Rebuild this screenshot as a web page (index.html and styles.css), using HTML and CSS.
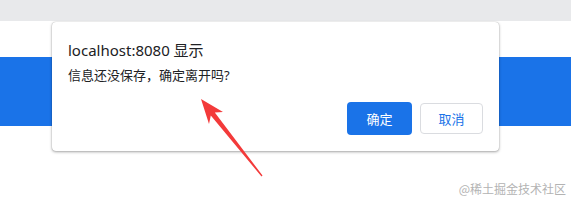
FILE: index.html
```html
<!DOCTYPE html>
<html lang="zh-CN">
<head>
    <meta charset="UTF-8">
    <title>离开提示</title>
    <link rel="stylesheet" href="styles.css">
</head>
<body>
    <div class="page">
        <div class="top-bar"></div>
        <div class="header-space"></div>
        <div class="banner"></div>
    </div>

    <div class="dialog">
        <div class="dialog-title">localhost:8080 显示</div>
        <div class="dialog-message">信息还没保存，确定离开吗?</div>
        <div class="dialog-buttons">
            <button class="btn btn-ok">确定</button>
            <button class="btn btn-cancel">取消</button>
        </div>
    </div>

    <!-- annotation arrow -->
    <svg class="arrow" width="571" height="202" viewBox="0 0 571 202">
        <polygon fill="#f33a3a" points="201,99 209,124 210.8,115.5 261.5,176.4 262.5,175.6 214.8,112.4 223,112"/>
    </svg>

    <div class="watermark">@稀土掘金技术社区</div>
</body>
</html>
```

FILE: styles.css
```css
body {
    margin: 0;
    width: 571px;
    height: 202px;
    position: relative;
    overflow: hidden;
    background: #ffffff;
    font-family: "Noto Sans", "Noto Sans CJK SC", sans-serif;
}
.top-bar {
    height: 21px;
    background: #e8e9eb;
}
.header-space {
    height: 36px;
}
.banner {
    height: 69px;
    background: #1a73e8;
}
.dialog {
    position: absolute;
    left: 52px;
    top: 22px;
    width: 447px;
    height: 129px;
    box-sizing: border-box;
    padding: 18px 16px 16px 16px;
    background: #ffffff;
    border-radius: 4px;
    box-shadow: 0 1px 3px rgba(0, 0, 0, 0.35), 0 0 1px rgba(0, 0, 0, 0.3);
    display: flex;
    flex-direction: column;
}
.dialog-title {
    font-size: 15px;
    line-height: 20px;
    color: #202124;
}
.dialog-message {
    margin-top: 6px;
    font-size: 13px;
    line-height: 18px;
    color: #202124;
}
.dialog-buttons {
    margin-top: auto;
    display: flex;
    justify-content: flex-end;
    align-items: center;
    gap: 8px;
}
.btn {
    font-family: "Noto Sans CJK SC", sans-serif;
    font-size: 13px;
    border-radius: 4px;
    cursor: pointer;
}
.btn-ok {
    width: 65px;
    height: 33px;
    background: #1a73e8;
    color: #ffffff;
    border: none;
}
.btn-cancel {
    width: 63px;
    height: 31px;
    background: #ffffff;
    color: #1a73e8;
    border: 1px solid #dadce0;
}
.arrow {
    position: absolute;
    left: 0;
    top: 0;
    pointer-events: none;
}
.watermark {
    position: absolute;
    right: 5px;
    bottom: 4px;
    font-family: "Noto Sans CJK SC", sans-serif;
    font-size: 12px;
    line-height: 18px;
    color: #b3b3b3;
}
```
